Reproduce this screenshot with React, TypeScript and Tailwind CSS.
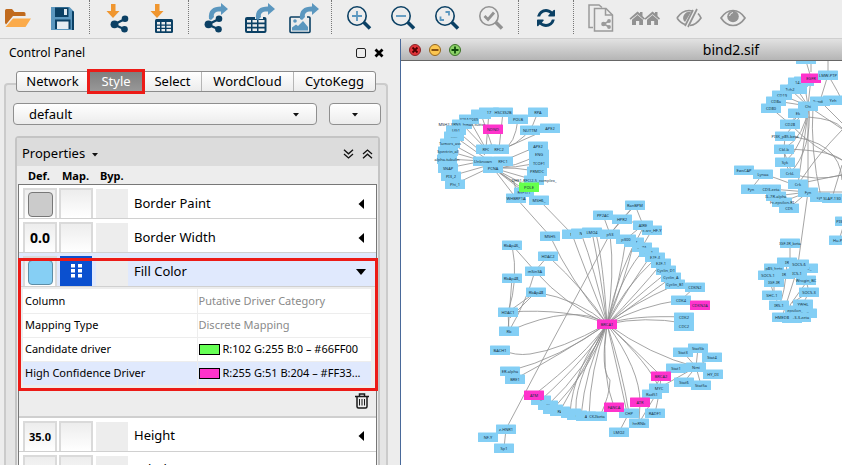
import type { ReactNode } from "react";

const BLUE = "#84cff5";
const PINK = "#ff33cc";
const NAVY = "#0b4064";
const STEEL = "#5b97bf";
const ORANGE = "#f0962f";
const GREY = "#929292";

type GraphNode = [number, number, string, string?];

const nodes: GraphNode[] = [
  [481, 114, ""], [469, 119, "KIAA0039"], [489, 112, "17"], [503, 112, "HSC3S2B"], [518, 119, "POLB"],
  [462, 124, "MSH2-XRN5_hmac-cutter"], [493, 129, "NDND", PINK], [456, 130, "UG1"], [454, 136, "......"],
  [450, 143, "Tumors_ass"], [448, 151, "Spectrin_all"], [447, 159, "alpha-tubulin"], [448, 168, "SNAP"],
  [451, 176, "PI3_2"], [455, 184, "Phi_1"], [486, 149, "RFC"], [499, 149, "RFC2"], [483, 161, "Unknown"],
  [503, 161, "RFC1"], [493, 168, "PCNA"], [538, 112, "RPA"], [550, 128, "APE2"], [530, 130, "NUTTM"],
  [538, 146, "APE2"], [539, 154, "ENG"], [539, 163, "TCOF1"], [537, 171, "PRMDC"],
  [534, 180, "DHF1-RFC(2-5_complex_"], [524, 192, "BSPIT1"], [529, 187, "POLE", "#66ff4c"],
  [516, 198, "WHBRP1A"], [539, 200, "MSH6_"],
  [550, 236, "MSH5"], [572, 234, "M"], [581, 233, "N"], [592, 232, "LMO4"], [512, 245, "RbAp46_"],
  [548, 256, "HDAC2"], [535, 271, "mSin3A"], [512, 278, "RbAp48_"], [536, 292, "RbAp48"],
  [508, 312, "HDAC1"], [509, 331, "Rb"],
  [635, 205, "RanBPM"], [603, 215, "PP2AC"], [622, 219, "HPR2"], [652, 230, "c-src_HF-Y"], [643, 225, "AIRE"],
  [610, 234, "p53"], [634, 242, "...-7"], [626, 239, "p300"], [642, 247, "...-7A"], [649, 252, "....-1"],
  [655, 257, "E2F-4"], [661, 263, "E2F-1"], [666, 270, "Cyclin_D1"], [671, 277, "Cyclin_A"],
  [675, 284, "Cyclin_B1"], [695, 287, "CDKN2"], [681, 300, "CDK4"], [700, 305, "CDKN2A", PINK],
  [684, 317, "CDK2"], [684, 326, "CDC2"],
  [500, 350, "BACH1"], [510, 371, "ER-alpha"], [515, 379, "BRE1"], [541, 400, "F"], [534, 395, "ATM", PINK],
  [548, 405, "Bl"], [553, 409, "M"], [560, 411, "RA"], [571, 413, "J"], [577, 415, "="],
  [586, 416, "A"], [597, 416, "CK2beta"], [506, 429, "z-HNR1"], [488, 437, "NF-Y"], [504, 448, "Sp1"],
  [683, 352, "Stat3"], [698, 348, "Stat5b"], [712, 357, "Stat4"], [676, 368, "Stat1"], [696, 367, "Nmi"],
  [713, 374, "HY_DI"], [684, 382, "Stat6"], [701, 385, "Stat5a"], [661, 376, "BRCA2", PINK],
  [652, 394, "Rad51"], [659, 388, "MYC"], [640, 402, "ATR", PINK], [629, 413, "CHP"],
  [614, 407, "FANCA", PINK], [655, 413, "RADF1"], [639, 423, "hnRNb"], [619, 432, "LMO2"],
  [607, 324, "BRCA1", PINK],
  [806, 59, ""], [804, 81, ""], [798, 82, "14-"], [811, 78, "EGFR", PINK], [828, 75, "LMW-PTP"], [797, 89, ""],
  [790, 89, "Tub2"], [782, 95, "CD19"], [776, 101, "CD8a"], [771, 108, "CD80"], [820, 101, "Syndc1"],
  [833, 100, "Yeh"], [808, 106, "Chi"], [798, 113, "Ek"], [790, 124, "CD28"], [785, 136, "PI3K_p85-beta"],
  [784, 149, "Cbl-b"], [785, 162, "Syk"], [790, 173, "CrkL"], [798, 184, "Crk"], [820, 197, "Lyn"],
  [808, 192, "Fyn"], [832, 198, "SLAP-130"], [789, 208, "CD5"], [782, 202, "Fc-epsilon-RI"],
  [776, 196, "IL-7R-alpha"], [771, 189, "CD3-zeta"], [751, 189, "Fyn"], [763, 174, "Lynaa"],
  [744, 170, "EwsCAP"], [845, 221, "PI3K_p85"], [839, 240, "Hu-PD"], [790, 243, "IGF-IR_beta"],
  [787, 262, "IR"], [808, 268, "_-1_"], [774, 268, "p85_beta"], [784, 274, "IR"], [768, 275, "SOCS-1"],
  [799, 264, "SOCS-6"], [797, 273, "ICS-1"], [806, 280, "Wrogin_BC"], [774, 282, "IGF-IR"],
  [809, 292, "SOCS-3"], [772, 295, "SHC-1"], [779, 305, "IRS-1"], [803, 304, "YWHL"],
  [807, 313, "-3"], [795, 310, "epsilon_"], [792, 318, ""], [782, 317, "HMED8"], [801, 317, "-3-3-zeta"],
];

const edges = [
  // hub around BRCA1
  "M607 324Q570 280 550 236", "M607 324Q585 270 572 234", "M607 324Q595 270 581 233", "M607 324Q600 270 592 232",
  "M607 324Q615 275 610 234", "M607 324Q603 260 596 234", "M607 324Q620 280 626 239", "M607 324Q618 270 643 228",
  "M607 324Q625 280 634 242", "M607 324Q624 270 645 249", "M607 324Q630 285 652 254", "M607 324Q622 290 655 259",
  "M607 324Q640 290 661 264", "M607 324Q650 285 668 272", "M607 324Q640 300 671 278", "M607 324Q630 305 675 285",
  "M607 324Q640 306 681 300", "M607 324Q630 315 684 317", "M607 324Q645 316 684 323",
  "M607 324Q585 290 548 256", "M607 324Q565 305 535 271", "M607 324Q580 300 536 292", "M607 324Q570 308 508 312",
  "M607 324Q575 302 509 331", "M607 324Q560 350 530 354Q515 356 502 350", "M607 324Q560 358 510 371",
  "M607 324Q565 352 515 379", "M607 324Q585 355 534 395", "M607 324Q590 355 541 400", "M607 324Q585 370 548 405",
  "M607 324Q590 370 553 409", "M607 324Q580 375 560 411", "M607 324Q573 370 570 413", "M607 324Q570 390 577 415",
  "M607 324Q585 370 581 416", "M607 324Q590 370 589 416", "M607 324Q600 370 610 380Q610 395 600 416",
  "M607 324Q600 370 614 407", "M607 324Q622 370 629 413", "M607 324Q620 380 627 413", "M607 324Q640 370 640 402",
  "M607 324Q650 365 659 388", "M607 324Q640 355 661 376", "M607 324Q650 355 696 367",
  // left repair cluster
  "M610 234L553 340L506 429L488 437M506 429L504 448", "M493 168L516 198L550 236", "M493 168L539 200L572 234",
  "M512 245Q519 280 508 312L509 331", "M512 245L535 271L548 256", "M512 278L508 331", "M535 271Q527 300 509 331",
  "M536 292L508 312", "M536 292L510 318", "M538 112Q530 140 503 149", "M550 128L503 149", "M518 119Q515 145 503 149",
  "M503 112L499 149", "M489 112L486 149", "M481 114L493 149", "M469 119L486 149", "M462 124L486 149",
  "M456 130L485 155", "M454 136L485 158", "M450 143L483 161", "M448 151L483 161", "M447 159L483 161",
  "M448 168L483 161", "M451 176L493 164", "M455 184L493 166", "M538 146L503 161", "M539 154Q515 168 493 168",
  "M539 163Q515 168 493 168", "M537 171Q515 167 493 168", "M534 180L493 168", "M529 187L493 168",
  "M524 192L493 168", "M493 168L514 182L518 198",
  // p53 and E2F
  "M603 215L610 234L635 205", "M622 219L635 205L643 225", "M622 219L610 234", "M622 219L643 225L626 239", "M652 230L642 247",
  "M695 287L681 300L700 305",
  // Stat family
  "M683 352L696 367L698 348M712 357L696 367L676 368M713 374L696 367L684 382M701 385L696 367L659 388",
  "M661 376L652 394M661 376Q660 392 655 413M640 402L639 423M629 413L619 432M655 396L639 423",
  // right cluster
  "M806 61L811 78M828 61L828 75L820 101M804 81L808 106L811 78M797 89L808 106L790 89M782 95L808 106L776 101",
  "M771 108L790 124L808 106M798 113L790 124M820 101L808 106L833 100M784 149Q806 135 808 106L785 136M785 162Q805 145 808 106",
  "M790 173Q812 150 809 106L798 184M808 106L808 192L820 197M813 106Q810 150 821 197M808 192Q790 182 763 174L744 170",
  "M763 174L751 189M771 189L808 192L776 196M782 202L808 192L789 208M808 192L798 264M790 243V262",
  "M808 106L842 129M808 117Q835 119 842 128M820 101L842 123M828 75Q840 95 842 101M785 136Q840 140 842 180",
  "M784 149Q830 150 842 160M790 124Q815 150 842 160M790 173Q815 182 842 175M798 184Q815 180 842 175M808 192H842",
  "M842 130Q818 155 808 170L798 184M842 165L832 198M785 136L784 149L785 162L790 173M783 149L792 173M845 221L839 240M811 61V72",
  "M787 262Q785 295 779 305M774 282V295L779 305M808 280L790 305L799 317M806 280L809 292L803 304M774 268L797 273L774 282M809 292L792 303",
  "M768 275L774 295M799 264L782 317M797 273L806 280",
];

function NetworkView() {
  return (
    <svg width="441" height="404" viewBox="401 61 441 404" className="block shrink-0" role="img" aria-label="bind2.sif network">
      <g fill="none" stroke="#8e8e8e" strokeWidth="0.8">
        {edges.map((d) => (
          <path key={d} d={d} />
        ))}
      </g>
      {nodes.map(([x, y, label, color], i) => (
        <g key={i}>
          <rect x={x - 10} y={y - 4.5} width="20" height="9.5" rx="0.6" fill={color ?? BLUE} />
          <text x={x} y={y + 1.5} fontSize="4" textAnchor="middle" fill="#14303f" fontFamily="Noto Sans, sans-serif">
            {label}
          </text>
        </g>
      ))}
    </svg>
  );
}

function Tool({ label, children }: { label: string; children: ReactNode }) {
  return (
    <button type="button" aria-label={label} className="h-[38px] w-9 shrink-0">
      <svg width="36" height="38" viewBox="0 0 36 38" fill="none">
        {children}
      </svg>
    </button>
  );
}

function Sep() {
  return (
    <div className="flex h-[34px] w-[3px] shrink-0 justify-center">
      <div className="border-l border-dotted border-[#777]" />
    </div>
  );
}

const DownArrow = () => <path d="M12 4h4.500v7H20.500L14 18 7.500 11H12z" fill={ORANGE} />;

const Share = ({ x = 0 }: { x?: number }) => (
  <g transform={`translate(${x} 0)`} fill={NAVY}>
    <path d="M26 19 15 24.500 26 29.500" fill="none" stroke={NAVY} strokeWidth="2.400" />
    <circle cx="26" cy="18.800" r="3.300" />
    <circle cx="15.500" cy="24.300" r="3.900" />
    <circle cx="25.500" cy="29.300" r="3.300" />
  </g>
);

const Swoosh = ({ x = 0 }: { x?: number }) => (
  <path transform={`translate(${x} 0)`} d="M11 19C10 10 15 6.500 23 6.500V3L30 9 23 15V11.500C18 11 15 13 16 17L13 20z" fill={STEEL} />
);

const Lens = ({ color = NAVY }: { color?: string }) => (
  <g stroke={color}>
    <circle cx="16" cy="16" r="9.200" strokeWidth="1.600" />
    <path d="m22.500 22 6.500 6.500" strokeWidth="3.600" />
  </g>
);

const House = ({ x }: { x: number }) => (
  <g transform={`translate(${x} 0)`} fill={GREY}>
    <path d="m1.500 18.500 8-7.000 2.500 2v-1.500h2.500v4l2.500 2.500-1 1.300-6.500-5.600L2.500 19.800z" />
    <path d="M4 19.700 9.500 15l5.500 4.700V25h-3.800v-4H8v4H4z" />
  </g>
);

function Toolbar() {
  return (
    <header className="flex h-[39px] shrink-0 gap-2 overflow-hidden border-b border-[#cfcfcf]">
      <Tool label="Open">
        <path d="M5 10.500Q5 9 6.500 9h5.500l2.500 3h9.500q1.500 0 1.500 1.500V16H13L6 24.500 5 23z" fill="#c06a1d" />
        <path d="M13 18.500h18L25.500 27H5.500z" fill="#fbab4b" />
      </Tool>
      <Tool label="Save">
        <path d="M7 7h18.500L30 11.500V30H7z" fill={STEEL} />
        <path d="M11 7.500h13.500V17H11zM11 19.500h15.500V29H11z" fill={NAVY} />
        <path d="M13 21.500h11.500V29H13z" fill="#e6edf2" />
        <path d="M20 9h3v6h-3z" fill="#dfe9f0" />
        <path d="M28 11v19h2V11.500z" fill={NAVY} />
      </Tool>
      <Sep />
      <Tool label="Import network">
        <DownArrow />
        <Share />
      </Tool>
      <Tool label="Import table">
        <DownArrow />
        <rect x="12" y="19" width="18" height="14" rx="1.500" fill={NAVY} />
        <path d="M14 22h3v2.500h-3zM18.500 22H22v2.500h-3.500zM23.500 22h4.500v2.500h-4.500zM14 25.700h3v2h-3zM18.500 25.700H22v2h-3.500zM23.500 25.700h4.500v2h-4.500zM14 29h3v2.300h-3zM18.500 29H22v2.300h-3.500zM23.500 29h4.500v2.300h-4.500z" fill="#ededed" />
      </Tool>
      <Sep />
      <Tool label="Export network">
        <Share x={-5} />
        <Swoosh />
      </Tool>
      <Tool label="Export table">
        <rect x="3" y="17" width="21.500" height="16" rx="2" fill={NAVY} />
        <path d="M5 20h4v2.600H5zM10.500 20H15v2.600h-4.500zM16.500 20h6v2.600h-6zM5 24.200h4v2.600H5zM10.500 24.200H15v2.600h-4.500zM16.500 24.200h6v2.600h-6zM5 28.400h4V31H5zM10.500 28.400H15V31h-4.500zM16.500 28.400h6V31h-6z" fill="#ededed" />
        <path d="M13 15h8v4h-8z" fill="#ededed" />
        <Swoosh x={3} />
      </Tool>
      <Tool label="Export image">
        <rect x="4" y="17" width="20" height="15.500" rx="1" stroke={NAVY} strokeWidth="1.600" />
        <path d="M6 30.500v-3l4-3 2 1.500 5-5 5 6v3.500z" fill={STEEL} />
        <circle cx="9" cy="21" r="1.800" fill={STEEL} />
        <path d="M14 14h7v5h-7z" fill="#ededed" />
        <Swoosh x={3} />
      </Tool>
      <Sep />
      <Tool label="Zoom in">
        <Lens />
        <path d="M16 11v10M11 16h10" stroke={STEEL} strokeWidth="1.800" />
      </Tool>
      <Tool label="Zoom out">
        <Lens />
        <path d="M11 16h10" stroke={STEEL} strokeWidth="1.800" />
      </Tool>
      <Tool label="Fit content">
        <Lens />
        <path d="M16.500 12H20v3.500M11.500 16.500V20H15" stroke={STEEL} strokeWidth="1.800" />
      </Tool>
      <Tool label="Zoom selected">
        <Lens color={GREY} />
        <path d="m11.500 16 3.500 3.500 6-7" stroke={GREY} strokeWidth="2.800" />
      </Tool>
      <Sep />
      <Tool label="Refresh">
        <svg x="7.500" y="7.500" width="21" height="21" viewBox="0 0 1792 1792">
          <path fill={NAVY} d="M1639 1056q0 5-1 7-64 268-268 434.500t-478 166.500q-146 0-282.500-55t-243.500-157l-129 129q-19 19-45 19t-45-19-19-45v-448q0-26 19-45t45-19h448q26 0 45 19t19 45-19 45l-137 137q71 66 161 102t187 36q134 0 250-65t186-179q11-17 53-117 8-23 30-23h192q13 0 22.500 9.500t9.500 22.500zm25-800v448q0 26-19 45t-45 19h-448q-26 0-45-19t-19-45 19-45l138-138q-148-137-349-137-134 0-250 65t-186 179q-11 17-53 117-8 23-30 23h-199q-13 0-22.500-9.500t-9.500-22.500v-7q65-268 270-434.500t480-166.500q146 0 284 55.500t245 156.500l130-129q19-19 45-19t45 19 19 45z" />
        </svg>
      </Tool>
      <Sep />
      <Tool label="New network from selection">
        <g stroke="#9a9a9a" strokeWidth="1.500">
          <path d="M10 27.500H6V5h10l3 2.500" />
          <path d="M11.500 8.500H23l6.500 6.500v16h-18z" />
          <path d="M22.500 8.500V15h7" />
          <path d="m26 21-5 3 5 3" />
        </g>
        <g fill="#9a9a9a">
          <circle cx="26" cy="21" r="1.900" />
          <circle cx="20.500" cy="24" r="2.300" />
          <circle cx="26" cy="27" r="1.900" />
        </g>
      </Tool>
      <Tool label="First neighbors">
        <House x={1} />
        <House x={16} />
      </Tool>
      <Tool label="Hide selected">
        <path d="M6 18q5-7.500 12-7.500 2 0 3 .5M6 18q3.500 5 8 6.500M27 13.500q2 2 3 4.500-5 7-11 7.500" stroke={GREY} strokeWidth="1.700" />
        <path d="m22 10-8 16M26 9 17 27" stroke={GREY} strokeWidth="1.700" />
        <path d="M20 12a6 6 0 0 0-6 10z" fill={GREY} />
      </Tool>
      <Tool label="Show all">
        <path d="M6 18q5-7.500 12-7.500T30 18q-5 7.500-12 7.500T6 18z" stroke={GREY} strokeWidth="1.700" />
        <circle cx="18" cy="16.500" r="5.800" fill={GREY} />
        <path d="M14.500 16q.5-3 3.500-3.500" stroke="#ededed" strokeWidth="1" />
      </Tool>
    </header>
  );
}

const Caret = ({ className = "" }: { className?: string }) => (
  <svg width="8" height="5" viewBox="0 0 8 5" className={className}>
    <path d="M1 1h6L4 4.500z" fill="#111" />
  </svg>
);

const tabs = [
  ["Network", "w-[71px]"],
  ["Style", "w-[56px]"],
  ["Select", "w-[58px] border-r"],
  ["WordCloud", "w-[92px] border-r"],
  ["CytoKegg", "flex-1"],
];

function PropertyRow({
  name,
  def,
  open = false,
  discrete = false,
}: {
  name: string;
  def: ReactNode;
  open?: boolean;
  discrete?: boolean;
}) {
  const box = "h-[30px] w-[34px] shrink-0 border-2 border-b-0 border-[#dadada] bg-linear-to-b from-[#ededed] to-white flex items-center justify-center text-sm font-bold";
  return (
    <div className={`flex h-[34px] border-b border-[#d0d0d0] pt-[3px] pl-1 ${open ? "bg-[#e0e9fd]" : "bg-white"}`}>
      <button type="button" aria-label={`${name} default`} className={box}>
        {def}
      </button>
      {discrete ? (
        <button type="button" aria-label={`${name} mapping`} className="mr-px ml-[3px] flex h-[30px] w-8 shrink-0 items-center justify-center bg-[#0b50cf]">
          <svg width="11" height="14" viewBox="0 0 11 14" fill="#fff">
            <path d="M0 0h4v3.500H0zM7 0h4v3.500H7zM0 5h4v3.500H0zM7 5h4v3.500H7zM0 10h4v3.500H0zM7 10h4v3.500H7z" />
          </svg>
        </button>
      ) : (
        <button type="button" aria-label={`${name} mapping`} className={`${box} ml-[2px]`} />
      )}
      <div className="mt-px ml-[3px] h-[29px] w-8 shrink-0 bg-[#ededed]" />
      <div className="flex h-[31px] flex-1 items-center justify-between pr-[9px] pl-[6px] text-[13px]">
        {name}
        <button type="button" aria-label={`Toggle ${name}`}>
          {open ? (
            <svg width="12" height="8" viewBox="0 0 12 8"><path d="M1 1h10L6 7z" /></svg>
          ) : (
            <svg width="12" height="12" viewBox="0 0 12 12"><path d="M9 1v10L3.500 6z" /></svg>
          )}
        </button>
      </div>
    </div>
  );
}

const mapping: [string, string, string?][] = [
  ["Column", "Putative Driver Category"],
  ["Mapping Type", "Discrete Mapping"],
  ["Candidate driver", "R:102 G:255 B:0 – #66FF00", "bg-[#66ff55]"],
  ["High Confidence Driver", "R:255 G:51 B:204 – #FF33...", "bg-[#ff33cc]"],
];

function ControlPanel() {
  return (
    <aside className="relative flex w-[400px] shrink-0 flex-col overflow-hidden bg-[#ededed]">
      <div className="flex h-8 shrink-0 items-center pr-4 pl-[9px]">
        <h2 className="flex-1 pb-1 text-xs">Control Panel</h2>
        <button type="button" aria-label="Float" className="mr-2 mb-1 size-[10px] rounded-[2px] border border-[#222]" />
        <button type="button" aria-label="Close" className="mb-1">
          <svg width="10" height="10" viewBox="0 0 10 10"><path d="m1.500 1.500 7 7m0-7-7 7" stroke="#000" strokeWidth="2.800" /></svg>
        </button>
      </div>

      <div className="relative z-10 mx-4 mr-6 flex h-[21px] shrink-0 rounded-[3px] border border-[#8c8c8c] bg-linear-to-b from-white to-[#ececec] text-[13px]">
        {tabs.map(([name, width]) =>
          name === "Style" ? (
            <div key={name} className={`relative ${width}`}>
              <button type="button" className="h-full w-full bg-linear-to-b from-[#7f7f7f] to-[#989898] leading-[19px] text-white">
                {name}
              </button>
              <div className="pointer-events-none absolute -inset-x-px -inset-y-[3px] border-3 border-[#ec1b17]" />
            </div>
          ) : (
            <button key={name} type="button" className={`${width} border-[#b5b5b5] leading-[19px]`}>
              {name}
            </button>
          )
        )}
      </div>

      <div className="-mt-[9px] mr-3 ml-1 flex flex-1 flex-col rounded-t border-2 border-b-0 border-[#cbcbcb] bg-[#e5e5e5] px-[7px] pt-[18px]">
        <div className="-mr-[2px] flex gap-3">
          <div className="relative h-[22px] flex-1">
            <select aria-label="Current style" className="block h-[22px] w-full appearance-none rounded border border-[#8f8f8f] bg-linear-to-b from-white to-[#ececec] pl-[15px] text-[13px] leading-5">
              <option>default</option>
            </select>
            <Caret className="pointer-events-none absolute top-[9px] right-[17px]" />
          </div>
          <button type="button" aria-label="Options" className="flex h-[22px] w-[52px] items-center justify-center rounded border border-[#8f8f8f] bg-linear-to-b from-white to-[#ececec]">
            <Caret />
          </button>
        </div>

        <section className="mt-[11px] mr-[-1px] ml-[2px] flex flex-1 flex-col rounded-t border-2 border-b-0 border-[#c4c4c4] bg-[#ededed]">
          <div className="flex h-[28px] items-center bg-[#dcdcdc] pt-1 pr-[5px] pl-[5px] text-[13px]">
            <button type="button" className="flex items-center gap-[6px]">
              Properties <Caret />
            </button>
            <div className="ml-auto flex gap-2">
              <button type="button" aria-label="Expand all">
                <svg width="11" height="10" viewBox="0 0 11 10" fill="none" stroke="#111" strokeWidth="1.300"><path d="m1 .8 4.500 4L10 .8M1 5l4.500 4L10 5" /></svg>
              </button>
              <button type="button" aria-label="Collapse all">
                <svg width="11" height="10" viewBox="0 0 11 10" fill="none" stroke="#111" strokeWidth="1.300"><path d="m1 5 4.500-4L10 5M1 9.200l4.500-4 4.500 4" /></svg>
              </button>
            </div>
          </div>
          <div className="flex h-[18px] items-end pl-[11px] text-[11px] leading-[14px] font-bold">
            <span className="w-[34px] pb-px">Def.</span>
            <span className="w-[38px] pb-px">Map.</span>
            <span className="pb-px">Byp.</span>
          </div>
          <div className="mx-px flex flex-1 flex-col border border-b-0 border-[#777] bg-white">
            <PropertyRow name="Border Paint" def={<span className="size-[25px] rounded border border-[#777] bg-[#cbcbcb]" />} />
            <PropertyRow name="Border Width" def="0.0" />
            <div className="relative bg-[#ededed]">
              <PropertyRow name="Fill Color" open discrete def={<span className="size-[25px] rounded border border-[#5d8da6] bg-[#86cff4]" />} />
              <table className="mt-[2px] ml-1 w-[348px] table-fixed border-collapse text-[11px]">
                <tbody>
                  {mapping.map(([name, value, swatch]) => (
                    <tr key={name} className={`h-6 border-b border-[#ededed] ${name.startsWith("High") ? "bg-[#e0e9fd]" : "bg-white"}`}>
                      <th scope="row" className="w-[174px] border-r border-[#ededed] pl-[2px] text-left font-normal">{name}</th>
                      <td className={swatch ? "pl-px" : "pl-px text-[#8a8a8a]"}>
                        <span className="flex items-center gap-[3px] whitespace-nowrap">
                          {swatch && <span className={`h-[11px] w-[21px] shrink-0 border border-black ${swatch}`} />}
                          {value}
                        </span>
                      </td>
                    </tr>
                  ))}
                </tbody>
              </table>
              <div className="flex h-8 items-center justify-end border-b-2 border-[#cfcfcf] pr-[7px]">
                <button type="button" aria-label="Remove mapping">
                  <svg width="14" height="16" viewBox="0 0 14 16" fill="none" stroke="#1a1a1a" strokeWidth="1.500">
                    <path d="M0 3.500h14M4.500 3V1h5v2M2 4v9.500Q2 15 3.500 15h7q1.500 0 1.500-1.500V4" />
                    <path d="M4.500 6v6.500M7 6v6.500M9.500 6v6.500" strokeWidth="1" />
                  </svg>
                </button>
              </div>
              <div className="pointer-events-none absolute top-[5px] -right-[2px] -left-px h-[133px] border-3 border-[#ec1b17]" />
            </div>
            <PropertyRow name="Height" def={<span className="text-[11px]">35.0</span>} />
            <PropertyRow name="Label" def="" />
          </div>
        </section>
      </div>
    </aside>
  );
}

export default function App() {
  return (
    <div className="flex h-screen flex-col overflow-hidden bg-[#ededed] font-['Noto_Sans',sans-serif] text-black">
      <Toolbar />
      <div className="flex min-h-0 flex-1">
        <ControlPanel />
        <main className="flex min-w-0 flex-1 flex-col overflow-hidden border-l border-[#49699a] bg-white">
          <div className="flex h-[22px] w-[664px] shrink-0 items-center gap-2 border-b border-[#666] bg-linear-to-b from-[#e2e2e2] to-[#b5b5b5] pl-2">
            <button type="button" aria-label="Close window">
              <svg width="12" height="12" viewBox="0 0 12 12"><circle cx="6" cy="6" r="5.500" fill="#e3343a" stroke="#8b2425" /><path d="m3.500 3.500 5 5m0-5-5 5" stroke="#4d0000" strokeWidth="1.800" /></svg>
            </button>
            <button type="button" aria-label="Minimize window">
              <svg width="12" height="12" viewBox="0 0 12 12"><circle cx="6" cy="6" r="5.500" fill="#fbc650" stroke="#93651f" /><path d="M2.500 6h7" stroke="#6b3500" strokeWidth="1.600" /></svg>
            </button>
            <button type="button" aria-label="Maximize window">
              <svg width="12" height="12" viewBox="0 0 12 12"><circle cx="6" cy="6" r="5.500" fill="#8cd267" stroke="#3c7028" /><path d="M2.500 6h7M6 2.500v7" stroke="#0f4a0b" strokeWidth="1.800" /></svg>
            </button>
            <h1 className="flex-1 pr-[72px] text-center text-sm">bind2.sif</h1>
          </div>
          <NetworkView />
        </main>
      </div>
    </div>
  );
}
